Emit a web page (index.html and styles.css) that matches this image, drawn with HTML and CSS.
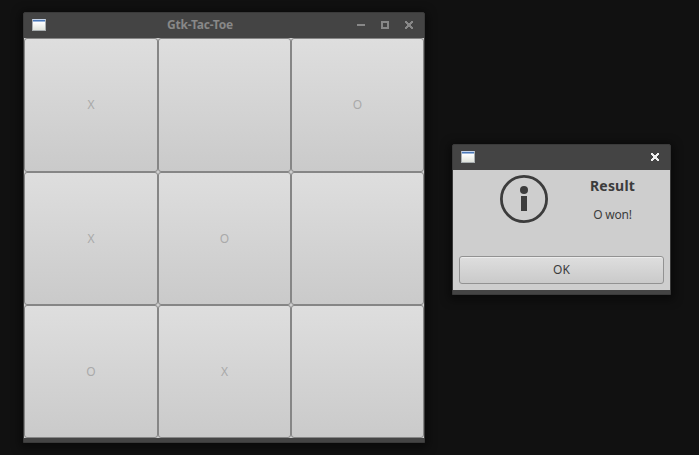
FILE: index.html
```html
<!DOCTYPE html>
<html lang="en">
<head>
<meta charset="utf-8">
<title>Gtk-Tac-Toe</title>
<link rel="stylesheet" href="styles.css">
</head>
<body>
<main class="desktop">
  <section class="window game inactive">
    <header class="titlebar">
      <span class="app-icon"></span>
      <h1 class="title">Gtk-Tac-Toe</h1>
      <div class="controls">
        <svg width="8" height="8" shape-rendering="crispEdges"><path d="M0 3h8v2H0z"/></svg>
        <svg width="8" height="8" shape-rendering="crispEdges"><path fill-rule="evenodd" d="M0 0h8v8H0zM2 2v4h4V2z"/></svg>
        <svg width="8" height="8" shape-rendering="crispEdges"><path d="M0 0h2v1h1v1h2V1h1V0h2v2H7v1H6v2h1v1h1v2H6V7H5V6H3v1H2v1H0V6h1V5h1V3H1V2H0z"/></svg>
      </div>
    </header>
    <div class="board">
      <button class="cell">X</button><button class="cell"></button><button class="cell">O</button>
      <button class="cell">X</button><button class="cell">O</button><button class="cell"></button>
      <button class="cell">O</button><button class="cell">X</button><button class="cell"></button>
    </div>
  </section>
  <section class="window dialog">
    <header class="titlebar">
      <span class="app-icon"></span>
      <div class="controls">
        <svg width="8" height="8" shape-rendering="crispEdges"><path d="M0 0h2v1h1v1h2V1h1V0h2v2H7v1H6v2h1v1h1v2H6V7H5V6H3v1H2v1H0V6h1V5h1V3H1V2H0z"/></svg>
      </div>
    </header>
    <div class="content">
      <div class="message">
        <svg class="info" width="48" height="48" viewBox="0 0 48 48"><circle cx="24" cy="24" r="22.6" fill="none" stroke="#3c3c3c" stroke-width="2.8"/><circle cx="24" cy="15" r="4" fill="#3c3c3c"/><path d="M21 21h6v15h-6z" fill="#3c3c3c"/></svg>
        <div class="text">
          <h2>Result</h2>
          <p>O won!</p>
        </div>
      </div>
      <button class="ok">OK</button>
    </div>
  </section>
</main>
</body>
</html>
```
FILE: styles.css
```css
* { box-sizing: border-box; }
body {
  margin: 0;
  background: #111;
  font: 12px/16px "Noto Sans", sans-serif;
  color: #3c3c3c;
}
.desktop {
  display: flex;
  align-items: flex-start;
  gap: 27px;
  height: 455px;
  padding: 12px 0 0 23px;
  overflow: hidden;
}
.window {
  background: #444;
  border: 1px solid #3a3a3a;
  border-radius: 2px 2px 0 0;
  box-shadow: 0 2px 10px 3px rgba(0, 0, 0, .45);
}
.game { width: 402px; height: 431px; }
.dialog { width: 219px; height: 151px; margin-top: 132px; }
.titlebar {
  display: flex;
  align-items: center;
  height: 25px;
  padding: 0 11px 1px 8px;
}
.app-icon {
  width: 14px;
  height: 12px;
  border: 1px solid #a9aeb0;
  border-top-color: #c3d2e8;
  background: linear-gradient(#4a78b8 0 1px, #9db8dc 1px 2px, #fff 2px, #dfe3dc);
}
.title {
  flex: 1;
  margin: 0;
  padding-right: 3px;
  font-size: 12px;
  line-height: 16px;
  letter-spacing: -.2px;
  text-align: center;
  color: #888;
}
.controls {
  display: flex;
  gap: 16px;
  margin-left: auto;
  fill: #f0f0f0;
}
.inactive .controls { fill: #888; }
.controls svg { display: block; }
button {
  padding: 0;
  border: 1px solid #868686;
  background: linear-gradient(#dedede, #cacaca);
  font: inherit;
  color: inherit;
}
.board {
  display: grid;
  grid-template-columns: 134px 133px 133px;
  grid-template-rows: 134px 133px 133px;
  background: #cecece;
}
.cell { border-radius: 3px; color: #a9a9a9; }
.content {
  display: flex;
  flex-direction: column;
  justify-content: space-between;
  height: 120px;
  padding: 5px 6px 6px;
  background: #cecece;
}
.message { display: flex; padding-left: 41px; }
.info { display: block; }
.text { flex: 1; text-align: center; padding: 1px 0 0 13px; }
h2 { margin: 0; font-size: 14px; line-height: 20px; letter-spacing: .2px; }
p { margin: 11px 0 0; letter-spacing: -.2px; }
.ok {
  height: 28px;
  border-color: #929292;
  border-radius: 3px;
  box-shadow: inset 0 1px #ececec;
}
```
